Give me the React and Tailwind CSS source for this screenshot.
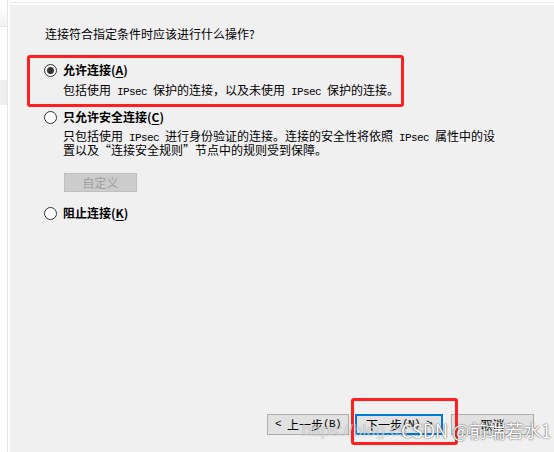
import React from "react";

const mono = "font-['Liberation_Mono',monospace] text-[11px] tracking-[-0.6px] whitespace-pre leading-none";
const line = "h-[14px] leading-[14px] whitespace-nowrap overflow-visible";

function Radio({ checked }) {
  return (
    <div className="w-[13px] h-[13px] rounded-full border border-[#333333] bg-white flex items-center justify-center shrink-0">
      {checked && <div className="w-[7px] h-[7px] rounded-full bg-[#333333]" />}
    </div>
  );
}

function Option({ checked, label, accel, children }) {
  return (
    <div className="flex flex-col">
      <div className="flex items-center gap-[6px] h-[16px]">
        <Radio checked={checked} />
        <span className="font-bold leading-[16px] whitespace-nowrap">
          {label}(<span className="underline underline-offset-2">{accel}</span>)
        </span>
      </div>
      {children}
    </div>
  );
}

function Btn({ children, w, focus }) {
  return (
    <div
      className={
        "h-[21px] flex items-center justify-center bg-[#e1e1e1] leading-[16px] whitespace-nowrap " +
        (focus ? "border-2 border-[#0078d7] " : "border border-[#adadad] ") +
        w
      }
    >
      {children}
    </div>
  );
}

export default function App() {
  return (
    <div className="relative w-[554px] h-[452px] bg-white overflow-hidden flex font-['Noto_Sans_CJK_SC',sans-serif] text-[12px] text-black">
      {/* left strip */}
      <div className="w-[8px] shrink-0 border-r border-[#e6e6e6] flex flex-col pt-[5px]">
        <div className="h-[22px] bg-gradient-to-b from-white to-[#f2f2f2] border-b border-[#e6e6e6]" />
        <div className="h-[53px]" />
        <div className="h-[25px] bg-[#eeeeee]" />
      </div>
      <div className="w-[2px] shrink-0" />
      {/* main */}
      <div className="flex-1 flex flex-col">
        <div className="h-[5px] flex flex-col pt-[2px]">
          <div className="h-px bg-[#e9e9e9]" />
        </div>
        <div className="flex-1 bg-[#f0f0f0] flex flex-col pl-[34px] pt-[21px] pr-[20px] pb-[17px]">
          <div className="ml-px h-[16px] leading-[16px]">连接符合指定条件时应该进行什么操作?</div>

          <div className="mt-[20px]">
            <Option checked label="允许连接" accel="A">
              <div className={"ml-[19px] mt-[5px] " + line}>
                包括使用<span className={mono}> IPsec </span>保护的连接，以及未使用<span className={mono}> IPsec </span>保护的连接。
              </div>
            </Option>
          </div>

          <div className="mt-[12px]">
            <Option label="只允许安全连接" accel="C">
              <div className="ml-[19px] mt-[4px]">
                <div className={line}>
                  只包括使用<span className={mono}> IPsec </span>进行身份验证的连接。连接的安全性将依照<span className={mono}> IPsec </span>属性中的设
                </div>
                <div className={line}>置以及“连接安全规则”节点中的规则受到保障。</div>
              </div>
              <div className="ml-[20px] mt-[16px] w-[73px] h-[19px] bg-[#cccccc] border border-[#bfbfbf] text-[#a0a0a0] flex items-center justify-center leading-[16px]">
                自定义
              </div>
            </Option>
          </div>

          <div className="mt-[13px]">
            <Option label="阻止连接" accel="K" />
          </div>

          <div className="mt-auto flex justify-end">
            <Btn w="w-[82px]">
              <span className={mono}>{"< "}</span>上一步<span className={mono}>(B)</span>
            </Btn>
            <div className="w-[6px]" />
            <Btn w="w-[88px]" focus>
              下一步<span className={mono}>(N) &gt;</span>
            </Btn>
            <div className="w-[8px]" />
            <Btn w="w-[83px]">取消</Btn>
          </div>
        </div>
      </div>

      {/* annotation boxes */}
      <div className="absolute left-[27px] top-[55px] w-[377px] h-[52px] border-[3px] border-[#ff1f1f] rounded-[3px]" />
      <div className="absolute left-[351px] top-[398px] w-[107px] h-[47px] border-[3px] border-[#ff1f1f] rounded-[3px]" />

      {/* watermark */}
      <div className="absolute left-[302px] top-[421px] text-[17px] leading-[20px] text-white/60 [text-shadow:0_0_1px_rgba(0,0,0,0.35)] font-['Liberation_Sans',sans-serif] whitespace-nowrap">
        https://blog.cs
      </div>
      <div className="absolute left-[401px] top-[419px] text-[18px] leading-[22px] text-white [text-shadow:0_0_1px_rgba(60,60,60,0.9),0_0_2px_rgba(60,60,60,0.6)] whitespace-nowrap font-['Noto_Sans_CJK_SC',sans-serif]">
        CSDN @前端若水1
      </div>
    </div>
  );
}
